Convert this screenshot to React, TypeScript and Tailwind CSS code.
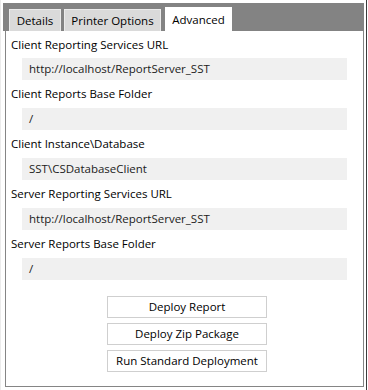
import React from "react";

const fields = [
  { label: "Client Reporting Services URL", value: "http://localhost/ReportServer_SST" },
  { label: "Client Reports Base Folder", value: "/" },
  { label: "Client Instance\\Database", value: "SST\\CSDatabaseClient" },
  { label: "Server Reporting Services URL", value: "http://localhost/ReportServer_SST" },
  { label: "Server Reports Base Folder", value: "/" },
];

const buttons = ["Deploy Report", "Deploy Zip Package", "Run Standard Deployment"];

export default function App() {
  return (
    <div
      className="w-[368px] h-[390px] bg-white flex text-[11.5px] text-black overflow-hidden"
      style={{ fontFamily: '"Open Sans", "Noto Sans", sans-serif' }}
    >
      <div className="w-px h-full bg-[#ececec]" />
      <div className="w-[2px]" />
      <div className="w-[361px] flex flex-col pt-[3px]">
        {/* tab strip */}
        <div className="h-[28px] bg-[#838383] flex items-end pl-[6px]">
          <div className="w-[52px] h-[22px] bg-[#dadada] border border-b-0 border-[#ebebeb] flex items-center justify-center">
            Details
          </div>
          <div className="ml-[3px] w-[97px] h-[22px] bg-[#dadada] border border-b-0 border-[#ebebeb] flex items-center justify-center">
            Printer Options
          </div>
          <div className="ml-[4px] w-[67px] h-[24px] bg-white flex items-center justify-center pt-[1px]">
            Advanced
          </div>
        </div>
        {/* panel */}
        <div className="ml-[2px] w-[359px] h-[356px] border-l border-r border-b border-[#858585] flex flex-col">
          {fields.map((f, i) => (
            <div key={i} className="flex flex-col">
              <div className={`${i === 0 ? "h-[27px]" : "h-[28px]"} flex items-center pl-[5px]`}>
                {f.label}
              </div>
              <div className="mx-[16px] h-[22px] bg-[#f0f0f0] flex items-center pl-[7px] text-[#1b1b1b]">
                {f.value}
              </div>
            </div>
          ))}
          <div className="mt-[16px] ml-[101px] flex flex-col gap-[5px]">
            {buttons.map((b) => (
              <div
                key={b}
                className="w-[160px] h-[22px] bg-white border border-[#cfcfcf] flex items-center justify-center"
              >
                {b}
              </div>
            ))}
          </div>
        </div>
      </div>
      <div className="w-[2px]" />
      <div className="w-px h-full bg-[#3c3c3c]" />
      <div className="w-px h-full bg-white" />
    </div>
  );
}
